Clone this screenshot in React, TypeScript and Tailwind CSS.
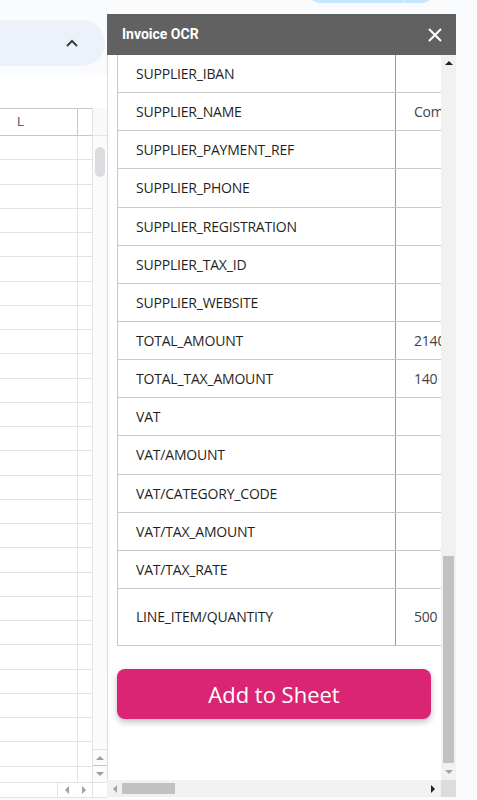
const rows: [string, string, boolean?][] = [
  ['SUPPLIER_IBAN', ''],
  ['SUPPLIER_NAME', 'Company Ltd'],
  ['SUPPLIER_PAYMENT_REF', ''],
  ['SUPPLIER_PHONE', ''],
  ['SUPPLIER_REGISTRATION', ''],
  ['SUPPLIER_TAX_ID', ''],
  ['SUPPLIER_WEBSITE', ''],
  ['TOTAL_AMOUNT', '2140'],
  ['TOTAL_TAX_AMOUNT', '140'],
  ['VAT', ''],
  ['VAT/AMOUNT', ''],
  ['VAT/CATEGORY_CODE', ''],
  ['VAT/TAX_AMOUNT', ''],
  ['VAT/TAX_RATE', ''],
  ['LINE_ITEM/QUANTITY', '500', true],
]

const sheetRows = Array.from({ length: 27 })

function SheetPane() {
  return (
    <div className="flex w-[107px] shrink-0 flex-col">
      <div className="h-[20px]" />
      <div className="-ml-[40px] flex h-[46px] w-[145px] items-center justify-end rounded-r-full bg-[#edf2fa] pr-[26px]">
        <svg width="14" height="10" viewBox="0 0 14 10" fill="none">
          <path d="M2 8 L7 3 L12 8" stroke="#3c4043" strokeWidth="2" />
        </svg>
      </div>
      <div className="h-[9px]" />
      <div className="h-[33px] bg-white" />
      <div className="flex h-[674px] flex-col bg-white">
        <div className="flex h-[674px]">
          <div className="flex w-[92px] flex-col overflow-hidden">
            <div className="flex h-[28px] shrink-0 border-y border-[#c4c7c5]">
              <div className="flex w-[77px] items-center pl-[17px] text-[13px] text-[#5f6368] [font-family:Roboto,sans-serif]">
                L
              </div>
              <div className="flex-1 border-l border-[#c4c7c5]" />
            </div>
            {sheetRows.map((_, i) => (
              <div key={i} className="flex h-[24.25px] shrink-0 border-b border-[#e2e3e3]">
                <div className="w-[77px]" />
                <div className="flex-1 border-l border-[#e2e3e3]" />
              </div>
            ))}
          </div>
          <div className="flex w-[15px] flex-col border-l border-[#e2e3e3] bg-[#fbfbfb]">
            <div className="h-[28px] border-b border-[#e2e3e3] bg-[#f8f9fa]" />
            <div className="mx-auto mt-[11px] h-[30px] w-[10px] rounded-full bg-[#dadce0]" />
            <div className="flex-1" />
            <div className="flex h-[16px] items-center justify-center border-t border-[#e2e3e3]">
              <span className="block h-0 w-0 border-x-[4px] border-b-[4px] border-x-transparent border-b-[#9aa0a6]" />
            </div>
            <div className="h-[1px] bg-[#a8c7fa]" />
            <div className="flex h-[16px] items-center justify-center">
              <span className="block h-0 w-0 border-x-[4px] border-t-[4px] border-x-transparent border-t-[#9aa0a6]" />
            </div>
          </div>
        </div>
      </div>
      <div className="flex h-[16px] border-y border-[#e2e3e3] bg-white">
        <div className="w-[57px]" />
        <div className="flex w-[19px] items-center justify-center border-l border-[#e2e3e3]">
          <span className="block h-0 w-0 border-y-[4px] border-r-[4px] border-y-transparent border-r-[#9aa0a6]" />
        </div>
        <div className="flex w-[16px] items-center justify-center">
          <span className="block h-0 w-0 border-y-[4px] border-l-[4px] border-y-transparent border-l-[#9aa0a6]" />
        </div>
        <div className="flex-1 border-l border-[#e2e3e3]" />
      </div>
    </div>
  )
}

function OcrPanel() {
  return (
    <div className="mt-[14px] flex h-[783px] w-[349px] shrink-0 flex-col bg-white">
      <div className="flex h-[41px] items-center justify-between bg-[#616161] pl-[15px] pr-[14px]">
        <span className="text-[14px] font-bold text-white [font-family:Roboto,sans-serif]">Invoice OCR</span>
        <svg width="14" height="14" viewBox="0 0 14 14" fill="none">
          <path d="M1 1 L13 13 M13 1 L1 13" stroke="white" strokeWidth="2" />
        </svg>
      </div>
      <div className="flex h-[725px]">
        <div className="w-[334px] overflow-hidden border-l border-[#dadce0] [font-family:'Open_Sans','Noto_Sans',sans-serif]">
          <div className="ml-[9px] w-[400px] border-l border-[#c6c9d1]">
            {rows.map(([key, value, tall]) => (
              <div
                key={key}
                className={`flex border-b border-[#c6c9d1] ${tall ? 'h-[57px]' : 'h-[38.15px]'}`}
              >
                <div className="flex w-[278px] shrink-0 items-center border-r border-[#939bab] pl-[18px] text-[14px] tracking-[-0.2px] text-[#1f1f1f]">
                  {key}
                </div>
                <div className="flex items-center whitespace-nowrap pl-[18px] text-[14px] tracking-[-0.2px] text-[#444]">
                  {value}
                </div>
              </div>
            ))}
          </div>
          <button className="ml-[9px] mt-[23px] flex h-[50px] w-[314px] items-center justify-center rounded-lg bg-[#d92574] pt-[2px] text-[22px] text-white shadow-[0_3px_6px_rgba(0,0,0,0.25)] [font-family:'Open_Sans','Noto_Sans',sans-serif]">
            Add to Sheet
          </button>
        </div>
        <div className="flex w-[15px] flex-col items-center bg-[#f1f1f1]">
          <div className="flex h-[15px] items-center justify-center">
            <span className="block h-0 w-0 border-x-[4px] border-b-[4px] border-x-transparent border-b-[#202020]" />
          </div>
          <div className="h-[486px]" />
          <div className="h-[207px] w-[11px] bg-[#c1c1c1]" />
          <div className="flex h-[17px] items-center justify-center">
            <span className="block h-0 w-0 border-x-[4px] border-t-[4px] border-x-transparent border-t-[#a3a3a3]" />
          </div>
        </div>
      </div>
      <div className="flex h-[17px] bg-[#f1f1f1]">
        <div className="flex w-[15px] items-center justify-center">
          <span className="block h-0 w-0 border-y-[4px] border-r-[4px] border-y-transparent border-r-[#a3a3a3]" />
        </div>
        <div className="my-[3px] w-[53px] bg-[#c1c1c1]" />
        <div className="flex-1" />
        <div className="flex w-[17px] items-center justify-center">
          <span className="block h-0 w-0 border-y-[4px] border-l-[4px] border-y-transparent border-l-[#202020]" />
        </div>
        <div className="w-[15px] bg-[#dcdcdc]" />
      </div>
    </div>
  )
}

export default function App() {
  return (
    <div className="relative flex h-[800px] w-[477px] overflow-hidden bg-[#f9fbfd]">
      <div className="absolute -top-[30px] left-[305px] flex h-[33px] w-[132px] overflow-hidden rounded-full bg-[#c2e7ff]">
        <div className="w-[99px] border-r border-[#e6f4ff]" />
      </div>
      <SheetPane />
      <OcrPanel />
    </div>
  )
}
